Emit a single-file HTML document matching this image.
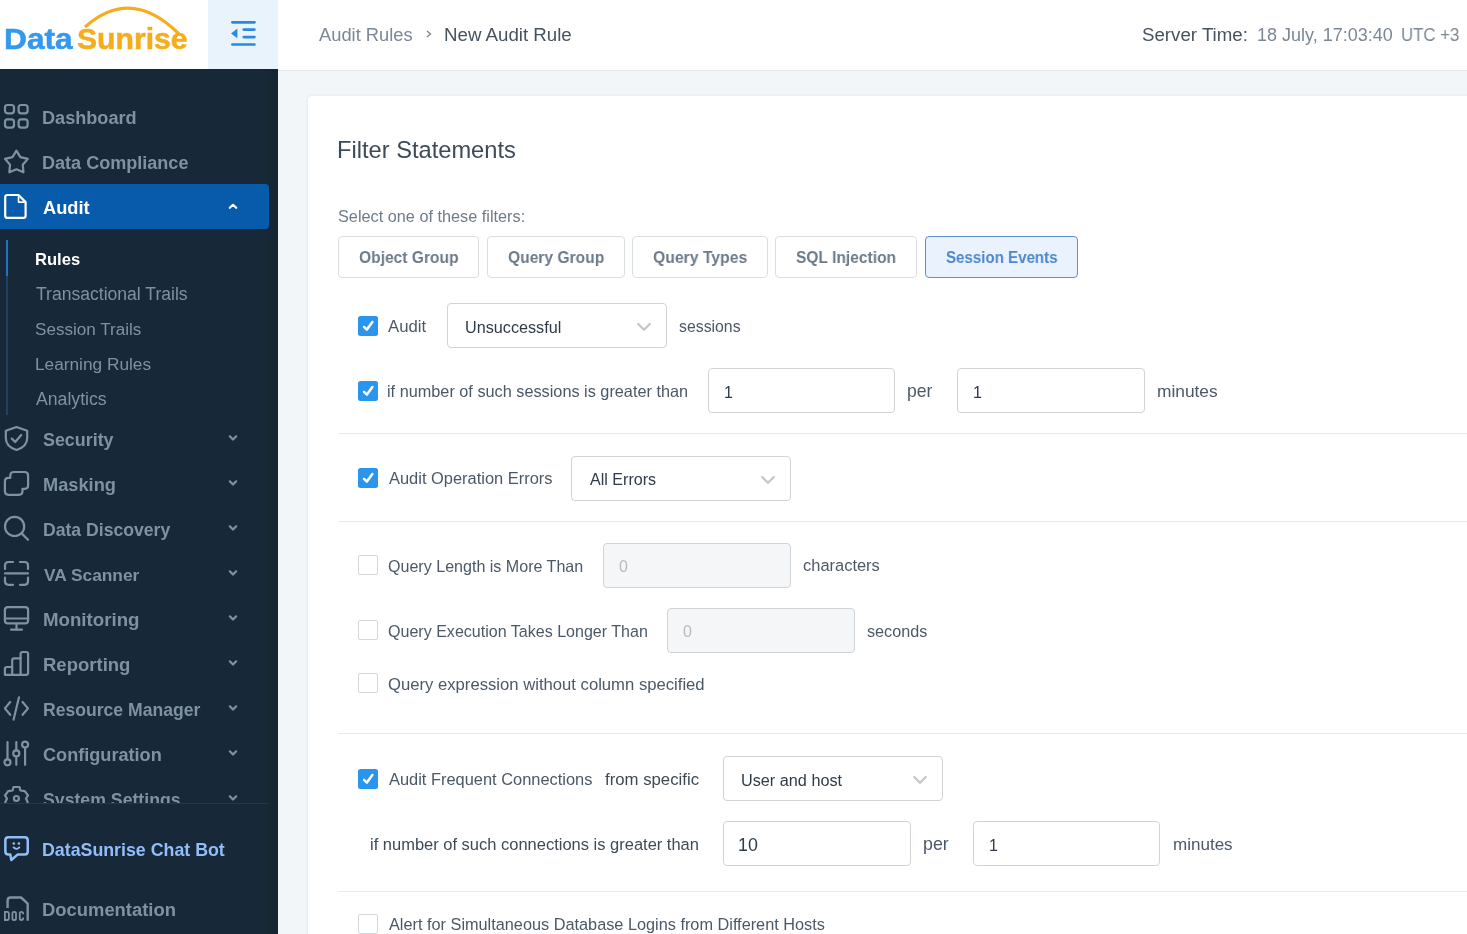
<!DOCTYPE html>
<html><head><meta charset="utf-8"><style>
html,body{margin:0;padding:0}
body{width:1467px;height:934px;overflow:hidden;position:relative;font-family:"Liberation Sans",sans-serif;background:#fff}
.t{position:absolute;line-height:1;white-space:nowrap;will-change:transform}
</style></head><body>
<div style="position:absolute;left:0px;top:0px;width:1467px;height:70px;background:#fff"></div>
<div style="position:absolute;left:278px;top:70px;width:1189px;height:1px;background:#e4e7ea"></div>
<div style="position:absolute;left:278px;top:71px;width:1189px;height:863px;background:#f3f6f8"></div>
<div style="position:absolute;left:208px;top:0px;width:70px;height:69px;background:#e9f3fc"></div>
<div style="position:absolute;left:0px;top:69px;width:278px;height:865px;background:#172938"></div>
<div style="position:absolute;left:262px;top:69px;width:16px;height:865px;background:linear-gradient(90deg,rgba(20,32,42,0) 0%,rgba(20,32,42,.55) 100%)"></div>
<div style="position:absolute;left:308px;top:96px;width:1192px;height:904px;background:#fff;border-radius:4px;box-shadow:0 0 3px rgba(40,60,80,.10)"></div>
<div class="t" style="left:3.56px;top:24.20px;font-size:30.03px;color:#3399ee;font-weight:bold;-webkit-text-stroke:0.5px #3399ee;transform:scaleX(1.0556);transform-origin:0 0;">Data</div>
<div class="t" style="left:77.37px;top:24.20px;font-size:30.03px;color:#f7ac1b;font-weight:bold;-webkit-text-stroke:0.5px #f7ac1b;transform:scaleX(1.0044);transform-origin:0 0;">Sunrise</div>
<svg style="position:absolute;left:0;top:0" width="208" height="69"><path d="M85 27 Q131 -14 179 34" fill="none" stroke="#f7ac1b" stroke-width="3.2"/></svg>
<svg style="position:absolute;left:208px;top:0" width="70" height="69"><g stroke="#2b89de" stroke-width="2.7" stroke-linecap="round" fill="none"><path d="M24.4 22.3 H46.4"/><path d="M35.8 29.6 H46.4"/><path d="M35.8 37.1 H46.4"/><path d="M24.4 44.5 H46.4"/></g><path d="M23 33.4 L29.4 28.5 V38.2 Z" fill="#2b89de"/></svg>
<div class="t" style="left:318.55px;top:25.80px;font-size:18.32px;color:#7b8895;">Audit Rules</div>
<svg style="position:absolute;left:424px;top:29px" width="9" height="10"><path d="M3 2 L6.5 5 L3 8" fill="none" stroke="#7b8895" stroke-width="1.3"/></svg>
<div class="t" style="left:443.96px;top:25.80px;font-size:18.70px;color:#46535f;">New Audit Rule</div>
<div class="t" style="left:1141.76px;top:25.70px;font-size:18.69px;color:#46535f;">Server Time:</div>
<div class="t" style="left:1256.85px;top:25.70px;font-size:18.02px;color:#7b8895;transform:scaleX(0.9988);transform-origin:0 0;">18 July, 17:03:40</div>
<div class="t" style="left:1400.90px;top:25.70px;font-size:18.02px;color:#7b8895;transform:scaleX(0.9321);transform-origin:0 0;">UTC +3</div>
<div style="position:absolute;left:0px;top:184px;width:269px;height:45px;background:#085bab;border-radius:0 4px 4px 0"></div>
<div class="t" style="left:42.28px;top:109.00px;font-size:18.11px;color:#7e92a1;font-weight:bold;">Dashboard</div>
<div class="t" style="left:42.28px;top:154.00px;font-size:18.06px;color:#7e92a1;font-weight:bold;">Data Compliance</div>
<div class="t" style="left:42.74px;top:199.00px;font-size:18.25px;color:#ffffff;font-weight:bold;">Audit</div>
<div style="position:absolute;left:6px;top:240px;width:2px;height:175px;background:#22415e"></div>
<div style="position:absolute;left:6px;top:240px;width:2px;height:36px;background:#1f72c4"></div>
<div class="t" style="left:35.08px;top:252.20px;font-size:16.60px;color:#ffffff;font-weight:bold;">Rules</div>
<div class="t" style="left:35.80px;top:286.20px;font-size:17.57px;color:#7e92a1;">Transactional Trails</div>
<div class="t" style="left:35.43px;top:321.00px;font-size:17.09px;color:#7e92a1;">Session Trails</div>
<div class="t" style="left:34.78px;top:355.80px;font-size:17.25px;color:#7e92a1;">Learning Rules</div>
<div class="t" style="left:35.96px;top:390.60px;font-size:17.65px;color:#7e92a1;">Analytics</div>
<div class="t" style="left:43.31px;top:432.00px;font-size:17.89px;color:#7e92a1;font-weight:bold;">Security</div>
<div class="t" style="left:42.57px;top:476.00px;font-size:18.23px;color:#7e92a1;font-weight:bold;">Masking</div>
<div class="t" style="left:42.61px;top:522.00px;font-size:17.62px;color:#7e92a1;font-weight:bold;">Data Discovery</div>
<div class="t" style="left:43.67px;top:567.00px;font-size:17.34px;color:#7e92a1;font-weight:bold;">VA Scanner</div>
<div class="t" style="left:42.54px;top:611.00px;font-size:18.68px;color:#7e92a1;font-weight:bold;">Monitoring</div>
<div class="t" style="left:42.55px;top:656.00px;font-size:18.53px;color:#7e92a1;font-weight:bold;">Reporting</div>
<div class="t" style="left:42.61px;top:702.00px;font-size:17.59px;color:#7e92a1;font-weight:bold;">Resource Manager</div>
<div class="t" style="left:43.07px;top:746.00px;font-size:18.13px;color:#7e92a1;font-weight:bold;">Configuration</div>
<div style="position:absolute;left:0;top:69px;width:268px;height:734px;overflow:hidden">
<div class="t" style="left:43.31px;top:723.00px;font-size:17.70px;color:#7e92a1;font-weight:bold;">System Settings</div>
</div>
<div style="position:absolute;left:0px;top:803px;width:268px;height:1px;background:#263847"></div>
<div class="t" style="left:42.30px;top:841.50px;font-size:17.79px;color:#93bdf7;font-weight:bold;">DataSunrise Chat Bot</div>
<div class="t" style="left:42.26px;top:900.90px;font-size:18.42px;color:#7e92a1;font-weight:bold;">Documentation</div>
<svg style="position:absolute;left:0;top:0" width="278" height="934"><g fill="none" stroke="#7e92a1" stroke-width="2.2" stroke-linecap="round" stroke-linejoin="round"><rect x="5" y="105" width="9" height="8.3" rx="2.5"/><rect x="18.6" y="105" width="9" height="8.3" rx="2.5"/><rect x="5" y="119.3" width="9" height="8.3" rx="2.5"/><rect x="18.6" y="119.3" width="9" height="8.3" rx="2.5"/><polygon points="16.40,150.60 20.34,157.18 27.81,158.89 22.77,164.67 23.45,172.31 16.40,169.30 9.35,172.31 10.03,164.67 4.99,158.89 12.46,157.18"/><path d="M16.5 427 L27.2 430.8 V438 C27.2 444 22.8 448 16.5 450 C10.2 448 5.8 444 5.8 438 V430.8 Z"/><path d="M11.8 438.6 L15.2 442 L21.2 435"/><path d="M10.3 475.5 Q10.3 472 13.8 472 H24.6 Q28.1 472 28.1 475.5 V485.5 Q28.1 488.8 24.6 488.8 H22.5 V491.3 Q22.5 494.8 19 494.8 H8.4 Q4.9 494.8 4.9 491.3 V481.3 Q4.9 477.8 8.4 477.8 H10.3 Z"/><circle cx="14.6" cy="526.4" r="9.6"/><path d="M21.6 533.4 L28 539.8"/><path d="M5 569 V565.5 Q5 562 8.5 562 H13"/><path d="M20 562 H24.5 Q28 562 28 565.5 V569"/><path d="M5 577.5 V581.3 Q5 584.8 8.5 584.8 H13"/><path d="M20 584.8 H24.5 Q28 584.8 28 581.3 V577.5"/><path d="M5 573.4 H28"/><rect x="4.9" y="607.1" width="23.2" height="16.3" rx="3"/><path d="M5 618.5 H28"/><path d="M16.5 623.5 V629.5"/><path d="M11 629.6 H22"/><path d="M4.9 674.8 V669 Q4.9 667 6.9 667 H12.2 V660.4 Q12.2 658.4 14.2 658.4 H20.6 V654 Q20.6 652 22.6 652 H26.1 Q28.1 652 28.1 654 V672.8 Q28.1 674.8 26.1 674.8 Z"/><path d="M12.2 667 V674.8"/><path d="M20.6 658.4 V674.8"/><path d="M10.2 702 L4.9 708.4 L10.2 714.8"/><path d="M22.6 702 L28 708.4 L22.6 714.8"/><path d="M19 697.3 L13.6 719.6"/><path d="M7.5 742 V759.2"/><circle cx="7.5" cy="762.3" r="3"/><path d="M16.3 742 V750.3"/><circle cx="16.3" cy="753.4" r="3"/><path d="M16.3 756.5 V764.8"/><circle cx="25.1" cy="744.6" r="3"/><path d="M25.1 747.7 V764.8"/></g></svg>
<svg style="position:absolute;left:0;top:780px" width="268" height="23"><g fill="none" stroke="#7e92a1" stroke-width="2.2" stroke-linejoin="round"><path d="M5 23 L7 18.5 L5 15.5 L8.2 11.2 L12.6 10.5 L13.5 7 H19.5 L20.4 10.5 L24.8 11.2 L28 15.5 L26 18.5 L28 23"/><circle cx="16.4" cy="18.5" r="2.5"/></g></svg>
<svg style="position:absolute;left:0;top:830px" width="40" height="40"><g fill="none" stroke="#93bdf7" stroke-width="2.5" stroke-linejoin="round" stroke-linecap="round"><path d="M8.4 7.2 H24.7 Q27.75 7.2 27.75 10.2 V21.6 Q27.75 24.6 24.7 24.6 H17.5 L11.3 30 L10.3 24.6 H8.4 Q5.35 24.6 5.35 21.6 V10.2 Q5.35 7.2 8.4 7.2 Z"/><path d="M13.6 17.4 Q16.35 20.3 19.3 17.4" stroke-width="1.9"/></g><g fill="#93bdf7"><circle cx="13.8" cy="13.5" r="1.3"/><circle cx="18.9" cy="13.5" r="1.3"/></g></svg>
<svg style="position:absolute;left:0;top:0" width="40" height="934"><g fill="none" stroke="#7e92a1" stroke-width="2.4" stroke-linejoin="round" stroke-linecap="butt"><path d="M7.6 908 V900.5 Q7.6 897.5 10.6 897.5 H21.1 L27.7 903.6 V920.8"/></g><g fill="none" stroke="#7e92a1" stroke-width="1.8"><path d="M4.9 911.9 H7 Q8.9 911.9 8.9 914 V918 Q8.9 920 7 920 H4.9 Z"/><rect x="12.4" y="911.9" width="3.6" height="8.1" rx="1.6"/><path d="M23.1 914.3 V913.6 Q23.1 911.9 21.4 911.9 Q19.8 911.9 19.8 913.6 V918.3 Q19.8 920 21.4 920 Q23.1 920 23.1 918.3 V917.6"/></g></svg>
<svg style="position:absolute;left:0;top:0" width="278" height="934"><g fill="none" stroke-width="2.2" stroke-linecap="round" stroke-linejoin="round"><path d="M229.8 207.8 L233 204.8 L236.2 207.8" stroke="#ffffff"/><path d="M229.8 436.3 L233 439.5 L236.2 436.3" stroke="#7e92a1"/><path d="M229.8 481.3 L233 484.5 L236.2 481.3" stroke="#7e92a1"/><path d="M229.8 526.3 L233 529.5 L236.2 526.3" stroke="#7e92a1"/><path d="M229.8 571.3 L233 574.5 L236.2 571.3" stroke="#7e92a1"/><path d="M229.8 616.3 L233 619.5 L236.2 616.3" stroke="#7e92a1"/><path d="M229.8 661.3 L233 664.5 L236.2 661.3" stroke="#7e92a1"/><path d="M229.8 706.3 L233 709.5 L236.2 706.3" stroke="#7e92a1"/><path d="M229.8 751.3 L233 754.5 L236.2 751.3" stroke="#7e92a1"/><path d="M229.8 796.3 L233 799.5 L236.2 796.3" stroke="#7e92a1"/></g></svg>
<svg style="position:absolute;left:0;top:190px" width="34" height="34"><g fill="none" stroke="#fff" stroke-width="2.2" stroke-linejoin="round"><path d="M7.5 5 H18.5 L25.6 12.1 V25.7 Q25.6 27.9 23.4 27.9 H7.5 Q5.2 27.9 5.2 25.7 V7.3 Q5.2 5 7.5 5 Z"/><path d="M18.5 5 V12.1 H25.6" stroke-width="1.6"/></g></svg>
<div class="t" style="left:337.35px;top:138.90px;font-size:23.66px;color:#3d4b58;">Filter Statements</div>
<div class="t" style="left:338.27px;top:207.60px;font-size:16.27px;color:#6f7c88;">Select one of these filters:</div>
<div style="position:absolute;left:338px;top:236px;width:141px;height:42px;box-sizing:border-box;border:1px solid #dcdfe2;border-radius:4px;background:#fff"></div>
<div class="t" style="left:359.18px;top:248.80px;font-size:17.04px;color:#6b7a89;font-weight:bold;transform:scaleX(0.9146);transform-origin:0 0;">Object Group</div>
<div style="position:absolute;left:487px;top:236px;width:138px;height:42px;box-sizing:border-box;border:1px solid #dcdfe2;border-radius:4px;background:#fff"></div>
<div class="t" style="left:507.98px;top:248.80px;font-size:17.04px;color:#6b7a89;font-weight:bold;transform:scaleX(0.9159);transform-origin:0 0;">Query Group</div>
<div style="position:absolute;left:632px;top:236px;width:136px;height:42px;box-sizing:border-box;border:1px solid #dcdfe2;border-radius:4px;background:#fff"></div>
<div class="t" style="left:652.97px;top:248.80px;font-size:17.04px;color:#6b7a89;font-weight:bold;transform:scaleX(0.9247);transform-origin:0 0;">Query Types</div>
<div style="position:absolute;left:775px;top:236px;width:142px;height:42px;box-sizing:border-box;border:1px solid #dcdfe2;border-radius:4px;background:#fff"></div>
<div class="t" style="left:796.47px;top:248.80px;font-size:17.04px;color:#6b7a89;font-weight:bold;transform:scaleX(0.9140);transform-origin:0 0;">SQL Injection</div>
<div style="position:absolute;left:925px;top:236px;width:153px;height:42px;box-sizing:border-box;border:1px solid #6290c8;border-radius:4px;background:#eaf3fd"></div>
<div class="t" style="left:945.79px;top:248.80px;font-size:17.04px;color:#4b86d0;font-weight:bold;transform:scaleX(0.8856);transform-origin:0 0;">Session Events</div>
<svg style="position:absolute;left:358px;top:316px" width="20" height="20"><rect x="0" y="0" width="20" height="20" rx="2.5" fill="#2b94ed"/><path d="M6 10.8 L8.9 13.6 L14.4 6.1" fill="none" stroke="#fff" stroke-width="2.5" stroke-linecap="round" stroke-linejoin="round"/></svg>
<div class="t" style="left:388.26px;top:319.20px;font-size:16.74px;color:#4b5967;">Audit</div>
<div style="position:absolute;left:447px;top:303px;width:220px;height:45px;box-sizing:border-box;border:1px solid #d1d4d7;border-radius:4px;background:#fff"></div>
<div class="t" style="left:464.74px;top:318.70px;font-size:16.20px;color:#2f3b47;">Unsuccessful</div>
<svg style="position:absolute;left:635.5px;top:322px" width="16" height="10"><path d="M2.2 2 L8 7.8 L13.8 2" fill="none" stroke="#c6c7c8" stroke-width="2.3" stroke-linecap="round" stroke-linejoin="round"/></svg>
<div class="t" style="left:679.36px;top:319.20px;font-size:15.83px;color:#4b5967;">sessions</div>
<svg style="position:absolute;left:358px;top:381px" width="20" height="20"><rect x="0" y="0" width="20" height="20" rx="2.5" fill="#2b94ed"/><path d="M6 10.8 L8.9 13.6 L14.4 6.1" fill="none" stroke="#fff" stroke-width="2.5" stroke-linecap="round" stroke-linejoin="round"/></svg>
<div class="t" style="left:387.20px;top:383.00px;font-size:16.27px;color:#4b5967;">if number of such sessions is greater than</div>
<div style="position:absolute;left:708px;top:368px;width:187px;height:45px;box-sizing:border-box;border:1px solid #d1d4d7;border-radius:4px;background:#fff"></div>
<div class="t" style="left:723.70px;top:384.50px;font-size:16.00px;color:#2f3b47;">1</div>
<div class="t" style="left:907.46px;top:383.00px;font-size:17.58px;color:#4b5967;">per</div>
<div style="position:absolute;left:957px;top:368px;width:188px;height:45px;box-sizing:border-box;border:1px solid #d1d4d7;border-radius:4px;background:#fff"></div>
<div class="t" style="left:973.00px;top:384.50px;font-size:16.00px;color:#2f3b47;">1</div>
<div class="t" style="left:1156.87px;top:383.00px;font-size:17.34px;color:#4b5967;">minutes</div>
<div style="position:absolute;left:338px;top:433px;width:1129px;height:1px;background:#e9ecef"></div>
<svg style="position:absolute;left:358px;top:468px" width="20" height="20"><rect x="0" y="0" width="20" height="20" rx="2.5" fill="#2b94ed"/><path d="M6 10.8 L8.9 13.6 L14.4 6.1" fill="none" stroke="#fff" stroke-width="2.5" stroke-linecap="round" stroke-linejoin="round"/></svg>
<div class="t" style="left:388.56px;top:470.00px;font-size:16.44px;color:#4b5967;">Audit Operation Errors</div>
<div style="position:absolute;left:571px;top:456px;width:220px;height:45px;box-sizing:border-box;border:1px solid #d1d4d7;border-radius:4px;background:#fff"></div>
<div class="t" style="left:589.96px;top:471.00px;font-size:16.07px;color:#2f3b47;">All Errors</div>
<svg style="position:absolute;left:759.5px;top:474.5px" width="16" height="10"><path d="M2.2 2 L8 7.8 L13.8 2" fill="none" stroke="#c6c7c8" stroke-width="2.3" stroke-linecap="round" stroke-linejoin="round"/></svg>
<div style="position:absolute;left:338px;top:521px;width:1129px;height:1px;background:#e9ecef"></div>
<div style="position:absolute;left:358px;top:555px;width:20px;height:20px;box-sizing:border-box;border:1px solid #d5d8db;border-radius:2px;background:#fff"></div>
<div class="t" style="left:387.84px;top:557.50px;font-size:16.07px;color:#4b5967;">Query Length is More Than</div>
<div style="position:absolute;left:603px;top:543px;width:188px;height:45px;box-sizing:border-box;border:1px solid #d1d4d7;border-radius:4px;background:#f4f6f8"></div>
<div class="t" style="left:619.10px;top:558.50px;font-size:16.00px;color:#b5bcc3;">0</div>
<div class="t" style="left:802.70px;top:557.30px;font-size:16.47px;color:#4b5967;">characters</div>
<div style="position:absolute;left:358px;top:620px;width:20px;height:20px;box-sizing:border-box;border:1px solid #d5d8db;border-radius:2px;background:#fff"></div>
<div class="t" style="left:387.54px;top:622.80px;font-size:16.06px;color:#4b5967;">Query Execution Takes Longer Than</div>
<div style="position:absolute;left:667px;top:608px;width:188px;height:45px;box-sizing:border-box;border:1px solid #d1d4d7;border-radius:4px;background:#f4f6f8"></div>
<div class="t" style="left:683.00px;top:623.50px;font-size:16.00px;color:#b5bcc3;">0</div>
<div class="t" style="left:867.15px;top:622.80px;font-size:16.19px;color:#4b5967;">seconds</div>
<div style="position:absolute;left:358px;top:673px;width:20px;height:20px;box-sizing:border-box;border:1px solid #d5d8db;border-radius:2px;background:#fff"></div>
<div class="t" style="left:387.51px;top:677.30px;font-size:16.66px;color:#4b5967;">Query expression without column specified</div>
<div style="position:absolute;left:338px;top:733px;width:1129px;height:1px;background:#e9ecef"></div>
<svg style="position:absolute;left:358px;top:769px" width="20" height="20"><rect x="0" y="0" width="20" height="20" rx="2.5" fill="#2b94ed"/><path d="M6 10.8 L8.9 13.6 L14.4 6.1" fill="none" stroke="#fff" stroke-width="2.5" stroke-linecap="round" stroke-linejoin="round"/></svg>
<div class="t" style="left:388.56px;top:771.00px;font-size:16.42px;color:#4b5967;">Audit Frequent Connections</div>
<div class="t" style="left:604.79px;top:772.00px;font-size:16.75px;color:#3d4a56;">from specific</div>
<div style="position:absolute;left:723px;top:756px;width:220px;height:45px;box-sizing:border-box;border:1px solid #d1d4d7;border-radius:4px;background:#fff"></div>
<div class="t" style="left:741.14px;top:771.50px;font-size:16.24px;color:#2f3b47;">User and host</div>
<svg style="position:absolute;left:911.5px;top:775px" width="16" height="10"><path d="M2.2 2 L8 7.8 L13.8 2" fill="none" stroke="#c6c7c8" stroke-width="2.3" stroke-linecap="round" stroke-linejoin="round"/></svg>
<div class="t" style="left:369.79px;top:836.00px;font-size:16.49px;color:#3d4a56;">if number of such connections is greater than</div>
<div style="position:absolute;left:723px;top:821px;width:188px;height:45px;box-sizing:border-box;border:1px solid #d1d4d7;border-radius:4px;background:#fff"></div>
<div class="t" style="left:738.06px;top:836.50px;font-size:17.84px;color:#2f3b47;">10</div>
<div class="t" style="left:922.84px;top:836.00px;font-size:17.80px;color:#4b5967;">per</div>
<div style="position:absolute;left:973px;top:821px;width:187px;height:45px;box-sizing:border-box;border:1px solid #d1d4d7;border-radius:4px;background:#fff"></div>
<div class="t" style="left:988.50px;top:837.50px;font-size:16.00px;color:#2f3b47;">1</div>
<div class="t" style="left:1172.59px;top:836.00px;font-size:17.05px;color:#4b5967;">minutes</div>
<div style="position:absolute;left:338px;top:891px;width:1129px;height:1px;background:#e9ecef"></div>
<div style="position:absolute;left:358px;top:914px;width:20px;height:20px;box-sizing:border-box;border:1px solid #d5d8db;border-radius:2px;background:#fff"></div>
<div class="t" style="left:388.56px;top:916.20px;font-size:16.29px;color:#4b5967;">Alert for Simultaneous Database Logins from Different Hosts</div>
</body></html>
